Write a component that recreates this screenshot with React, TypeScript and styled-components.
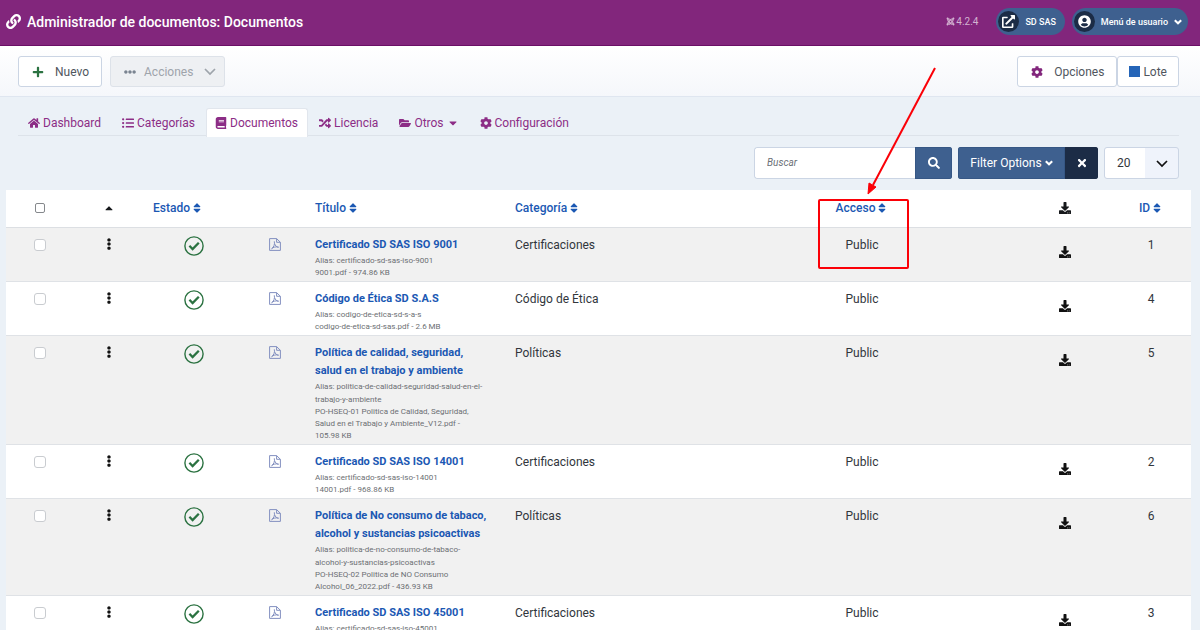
import React from 'react';
import styled, { createGlobalStyle, css } from 'styled-components';
import {
  FaBook,
  FaCaretDown,
  FaCaretUp,
  FaCog,
  FaDownload,
  FaEllipsisH,
  FaEllipsisV,
  FaExternalLinkAlt,
  FaFolderOpen,
  FaHome,
  FaJoomla,
  FaLink,
  FaListUl,
  FaPlus,
  FaRandom,
  FaSearch,
  FaSort,
  FaTimes,
  FaUserCircle,
} from 'react-icons/fa';

const color = {
  brand: '#82267c',
  link: '#1b58b3',
  tab: '#8c2d86',
  blue: '#3e608f',
  navy: '#1c2c46',
  green: '#2b7241',
  border: '#cbd5e4',
  page: '#ebf1f7',
};

const GlobalStyle = createGlobalStyle`
  *, *::before, *::after { box-sizing: border-box; }
  html { scrollbar-width: none; background: ${color.page}; }
  body {
    margin: 0;
    font-family: Roboto, "Liberation Sans", sans-serif;
    font-size: 12px;
    line-height: 18px;
    color: #31363c;
  }
  button, input, select { font: inherit; color: inherit; margin: 0; }
  button { cursor: pointer; }
  a { text-decoration: none; color: inherit; }
  svg { display: block; flex: none; }
`;

const Header = styled.header`
  display: flex;
  align-items: center;
  gap: 7px;
  padding: 8px 12px 10px 6px;
  background: ${color.brand};
  border-bottom: 1px solid #6b0f66;
  color: #fff;
`;

const PageTitle = styled.h1`
  display: flex;
  align-items: center;
  gap: 6px;
  flex: 1;
  margin: 0;
  font-size: 14px;
  font-weight: 500;
`;

const Version = styled.span`
  display: flex;
  align-items: center;
  gap: 1px;
  margin-right: 11px;
  font-size: 10px;
  color: #d3b3d1;
`;

const pill = css`
  display: flex;
  align-items: center;
  gap: 6px;
  height: 27px;
  padding: 0 9px 0 2px;
  border: 0;
  border-radius: 14px;
  background: ${color.blue};
  color: #fff;
  font-size: 9px;
  font-weight: 500;
`;

const PillLink = styled.a`${pill}`;
const PillButton = styled.button`${pill}
  padding-right: 6px;
`;

const PillIcon = styled.span`
  display: grid;
  place-items: center;
  width: 21px;
  height: 21px;
  border-radius: 50%;
  background: ${color.navy};
`;

const Toolbar = styled.div`
  display: flex;
  align-items: center;
  padding: 10px 21px 9px 18px;
  background: linear-gradient(#fff, #f5f7fb);
  border-bottom: 1px solid #dfe6f0;
`;

const ToolGroup = styled.div<{ $gap?: number }>`
  display: flex;
  gap: ${(p) => p.$gap ?? 0}px;
  &:last-child { margin-left: auto; }
`;

const ToolButton = styled.button<{ $compact?: boolean }>`
  display: flex;
  align-items: center;
  gap: ${(p) => (p.$compact ? 3 : 11)}px;
  height: 31px;
  padding: ${(p) => (p.$compact ? '0 11px' : '0 12px 0 13px')};
  border: 1px solid ${color.border};
  border-radius: 3px;
  background: #fff;
  color: #50565e;

  &:disabled {
    gap: 8px;
    padding: 0 8px 0 13px;
    background: #eef0f3;
    border-color: #dde2e9;
    color: #9ea4ab;
    cursor: default;
  }
`;

const MenuArrow = styled.span`
  padding-left: 3px;
`;

const Square = styled.span`
  width: 11px;
  height: 11px;
  background: #2565b8;
`;

const Content = styled.main`
  padding: 11px 9px 0 6px;
`;

const Tabs = styled.nav`
  display: flex;
  gap: 1px;
  height: 28px;
  margin: 0 12px;
  border-bottom: 1px solid #dde3ea;
`;

const Tab = styled.a<{ $active?: boolean }>`
  display: flex;
  align-items: center;
  gap: 3px;
  height: 29px;
  padding: 0 10px;
  color: ${color.tab};
  svg { width: auto; height: 12px; }
  ${(p) => p.$active && css`
    background: #fff;
    border: 1px solid #e1e6ed;
    border-bottom: 0;
    border-radius: 3px 3px 0 0;
    padding: 0 9px 0 8px;
  `}
`;

const Filters = styled.form`
  display: flex;
  justify-content: flex-end;
  gap: 6px;
  margin: 11px 12px;
`;

const Group = styled.div`
  display: flex;
  height: 32px;
  border-radius: 3px;
  overflow: hidden;
`;

const SearchInput = styled.input`
  width: 161px;
  padding: 0 12px;
  border: 1px solid ${color.border};
  border-right: 0;
  border-radius: 3px 0 0 3px;
  background: #fff;
  font-size: 10px;
  &::placeholder { font-style: italic; color: #6c7177; opacity: 1; }
`;

const FilterButton = styled.button<{ $dark?: boolean; $width: number }>`
  display: flex;
  align-items: center;
  justify-content: center;
  gap: 3px;
  width: ${(p) => p.$width}px;
  padding: 0;
  border: 1px solid ${(p) => (p.$dark ? color.navy : '#365785')};
  background: ${(p) => (p.$dark ? color.navy : color.blue)};
  color: #fff;
`;

const SelectBox = styled.div`
  position: relative;
  height: 32px;
`;

const Select = styled.select`
  appearance: none;
  width: 75px;
  height: 32px;
  padding: 0 12px;
  border: 1px solid ${color.border};
  border-radius: 3px;
  background: linear-gradient(90deg, #fff 40px, #eff3fb 40px);
`;

const SelectArrow = styled.span`
  position: absolute;
  right: 11px;
  top: 13px;
  pointer-events: none;
  color: #111;
`;

const Table = styled.table`
  width: 100%;
  table-layout: fixed;
  border-collapse: separate;
  border-spacing: 0;
  background: #fff;
`;

const Col = styled.col<{ $w?: number }>`
  width: ${(p) => (p.$w ? `${p.$w}px` : 'auto')};
`;

const Th = styled.th<{ $left?: boolean }>`
  position: relative;
  height: 38px;
  padding: 0 9px 1px;
  border-bottom: 1px solid #dcdfe3;
  text-align: ${(p) => (p.$left ? 'left' : 'center')};
  font-weight: 500;
  color: #16181b;
`;

const SortLink = styled.a`
  display: inline-flex;
  align-items: center;
  gap: 1px;
  vertical-align: top;
  color: ${color.link};
`;

const Row = styled.tr`
  &:nth-child(odd) { background: #f1f1f1; }
`;

const Td = styled.td<{ $left?: boolean }>`
  padding: 8px 9px 2px;
  border-bottom: 1px solid #dfe2e6;
  text-align: ${(p) => (p.$left ? 'left' : 'center')};
  vertical-align: top;
`;

const Centered = styled.span<{ $top?: number }>`
  display: flex;
  justify-content: center;
  padding-top: ${(p) => p.$top ?? 0}px;
`;

const Check = styled.input<{ $head?: boolean }>`
  appearance: none;
  display: block;
  width: ${(p) => (p.$head ? 10 : 12)}px;
  height: ${(p) => (p.$head ? 10 : 12)}px;
  margin: 0;
  border: 1px solid ${(p) => (p.$head ? '#85888c' : '#c9ccd0')};
  border-radius: ${(p) => (p.$head ? 2 : 3)}px;
  background: #fff;
`;

const IconButton = styled.button`
  display: block;
  padding: 0;
  border: 0;
  background: none;
  color: #111;
`;

const DocTitle = styled.a`
  display: block;
  max-width: 176px;
  font-size: 11px;
  font-weight: 700;
  color: ${color.link};
`;

const Alias = styled.div`
  max-width: 170px;
  font-size: 8px;
  line-height: 13px;
  color: #6c6f73;
`;

const FileInfo = styled(Alias)`
  line-height: 12px;
`;

const Callout = styled.svg`
  position: absolute;
  left: 50%;
  top: -130px;
  margin-left: -50px;
  z-index: 2;
  pointer-events: none;
`;

const tabs = [
  { label: 'Dashboard', Icon: FaHome },
  { label: 'Categorías', Icon: FaListUl },
  { label: 'Documentos', Icon: FaBook, active: true },
  { label: 'Licencia', Icon: FaRandom },
  { label: 'Otros', Icon: FaFolderOpen, menu: true },
  { label: 'Configuración', Icon: FaCog },
];

const documents = [
  { id: 1, title: 'Certificado SD SAS ISO 9001', alias: 'certificado-sd-sas-iso-9001', file: '9001.pdf - 974.86 KB', category: 'Certificaciones' },
  { id: 4, title: 'Código de Ética SD S.A.S', alias: 'codigo-de-etica-sd-s-a-s', file: 'codigo-de-etica-sd-sas.pdf - 2.6 MB', category: 'Código de Ética' },
  { id: 5, title: 'Política de calidad, seguridad, salud en el trabajo y ambiente', alias: 'politica-de-calidad-seguridad-salud-en-el-trabajo-y-ambiente', file: 'PO-HSEQ-01 Politica de Calidad, Seguridad, Salud en el Trabajo y Ambiente_V12.pdf - 105.98 KB', category: 'Políticas' },
  { id: 2, title: 'Certificado SD SAS ISO 14001', alias: 'certificado-sd-sas-iso-14001', file: '14001.pdf - 968.86 KB', category: 'Certificaciones' },
  { id: 6, title: 'Política de No consumo de tabaco, alcohol y sustancias psicoactivas', alias: 'politica-de-no-consumo-de-tabaco-alcohol-y-sustancias-psicoactivas', file: 'PO-HSEQ-02 Politica de NO Consumo Alcohol_06_2022.pdf - 436.93 KB', category: 'Políticas' },
  { id: 3, title: 'Certificado SD SAS ISO 45001', alias: 'certificado-sd-sas-iso-45001', file: '45001.pdf', category: 'Certificaciones' },
];

const Chevron = ({ width, bold }: { width: number; bold?: boolean }) => (
  <svg width={width} height={Math.ceil(width * 0.66)} viewBox="0 0 12 8" fill="none" stroke="currentColor" strokeWidth={bold ? 3 : 1.7}>
    <path d={bold ? 'M1.2 1.3L6 6l4.8-4.7' : 'M1 1l5 5 5-5'} />
  </svg>
);

const PublishedIcon = () => (
  <svg width="20" height="20" viewBox="0 0 20 20" fill="none" stroke={color.green}>
    <circle cx="10" cy="10" r="9.1" strokeWidth="1.4" />
    <path d="M5.4 9.8L8.6 13l6.2-6.3" strokeWidth="2.3" />
  </svg>
);

const PdfIcon = () => (
  <svg width="12" height="13" viewBox="0 0 12 13" fill="none" stroke="#8390c0" strokeWidth="1">
    <path d="M1 .6h6.6l3.8 3.7v8.1H.6V.6zM7.6.6v3.7h3.8" />
    <path d="M2.6 10.7C4.8 9.2 6 6.4 5.3 3.3M5.6 5.6c.6 2.1 2 3.5 4 3.6M2.6 10.7c1.6-1.6 4.4-2.3 7-1.5" />
  </svg>
);

const Sortable = ({ label }: { label: string }) => (
  <SortLink href="#">
    {label}
    <FaSort size={12} />
  </SortLink>
);

export default function App() {
  return (
    <>
      <GlobalStyle />
      <Header>
        <PageTitle>
          <FaLink size={15} />
          Administrador de documentos: Documentos
        </PageTitle>
        <Version>
          <FaJoomla size={9} />
          4.2.4
        </Version>
        <PillLink href="#">
          <PillIcon><FaExternalLinkAlt size={13} /></PillIcon>
          SD SAS
        </PillLink>
        <PillButton type="button">
          <PillIcon><FaUserCircle size={13} /></PillIcon>
          Menú de usuario
          <Chevron width={8} bold />
        </PillButton>
      </Header>

      <Toolbar>
        <ToolGroup $gap={8}>
          <ToolButton type="button">
            <FaPlus size={12} color={color.green} />
            Nuevo
          </ToolButton>
          <ToolButton type="button" disabled>
            <FaEllipsisH size={12} color="#7a8491" />
            Acciones
            <MenuArrow><Chevron width={12} /></MenuArrow>
          </ToolButton>
        </ToolGroup>
        <ToolGroup>
          <ToolButton type="button">
            <FaCog size={12} color={color.brand} />
            Opciones
          </ToolButton>
          <ToolButton type="button" $compact>
            <Square />
            Lote
          </ToolButton>
        </ToolGroup>
      </Toolbar>

      <Content>
        <Tabs aria-label="Secciones">
          {tabs.map(({ label, Icon, active, menu }) => (
            <Tab key={label} href="#" $active={active}>
              <Icon />
              {label}
              {menu && <FaCaretDown />}
            </Tab>
          ))}
        </Tabs>

        <Filters onSubmit={(e) => e.preventDefault()}>
          <Group>
            <SearchInput type="search" aria-label="Buscar" placeholder="Buscar" />
            <FilterButton type="submit" aria-label="Buscar" $width={37}><FaSearch size={12} /></FilterButton>
          </Group>
          <Group>
            <FilterButton type="button" $width={107}>
              Filter Options
              <Chevron width={8} bold />
            </FilterButton>
            <FilterButton type="button" aria-label="Limpiar" $dark $width={33}><FaTimes size={12} /></FilterButton>
          </Group>
          <SelectBox>
            <Select aria-label="Documentos por página" defaultValue="20">
              <option>10</option>
              <option>20</option>
              <option>50</option>
            </Select>
            <SelectArrow><Chevron width={12} /></SelectArrow>
          </SelectBox>
        </Filters>

        <Table>
          <colgroup>
            <Col $w={68} />
            <Col $w={70} />
            <Col $w={100} />
            <Col $w={62} />
            <Col $w={200} />
            <Col />
            <Col $w={314} />
            <Col $w={92} />
            <Col $w={80} />
          </colgroup>
          <thead>
            <tr>
              <Th><Centered><Check $head type="checkbox" aria-label="Seleccionar todo" /></Centered></Th>
              <Th><Centered><FaCaretUp size={12} /></Centered></Th>
              <Th $left><Sortable label="Estado" /></Th>
              <Th />
              <Th $left><Sortable label="Título" /></Th>
              <Th $left><Sortable label="Categoría" /></Th>
              <Th>
                <Sortable label="Acceso" />
                <Callout width="130" height="212" viewBox="0 0 130 212" fill="none" stroke="#fb0007" aria-hidden="true">
                  <path d="M123 8L61 125" strokeWidth="2" />
                  <path d="M56 134L57 123L64 127Z" fill="#fb0007" strokeWidth="1" />
                  <rect x="7" y="140" width="89" height="68" rx="1" strokeWidth="2" />
                </Callout>
              </Th>
              <Th><Centered><FaDownload size={12} /></Centered></Th>
              <Th><Sortable label="ID" /></Th>
            </tr>
          </thead>
          <tbody>
            {documents.map((doc) => (
              <Row key={doc.id}>
                <Td><Centered $top={3}><Check type="checkbox" aria-label={doc.title} /></Centered></Td>
                <Td><Centered $top={2}><IconButton type="button" aria-label="Acciones"><FaEllipsisV size={12} /></IconButton></Centered></Td>
                <Td><Centered><IconButton type="button" aria-label="Publicado"><PublishedIcon /></IconButton></Centered></Td>
                <Td><Centered $top={2}><PdfIcon /></Centered></Td>
                <Td $left>
                  <DocTitle href="#">{doc.title}</DocTitle>
                  <Alias>Alias: {doc.alias}</Alias>
                  <FileInfo>{doc.file}</FileInfo>
                </Td>
                <Td $left>{doc.category}</Td>
                <Td>Public</Td>
                <Td><Centered $top={10}><IconButton type="button" aria-label="Descargar"><FaDownload size={12} /></IconButton></Centered></Td>
                <Td>{doc.id}</Td>
              </Row>
            ))}
          </tbody>
        </Table>
      </Content>
    </>
  );
}
